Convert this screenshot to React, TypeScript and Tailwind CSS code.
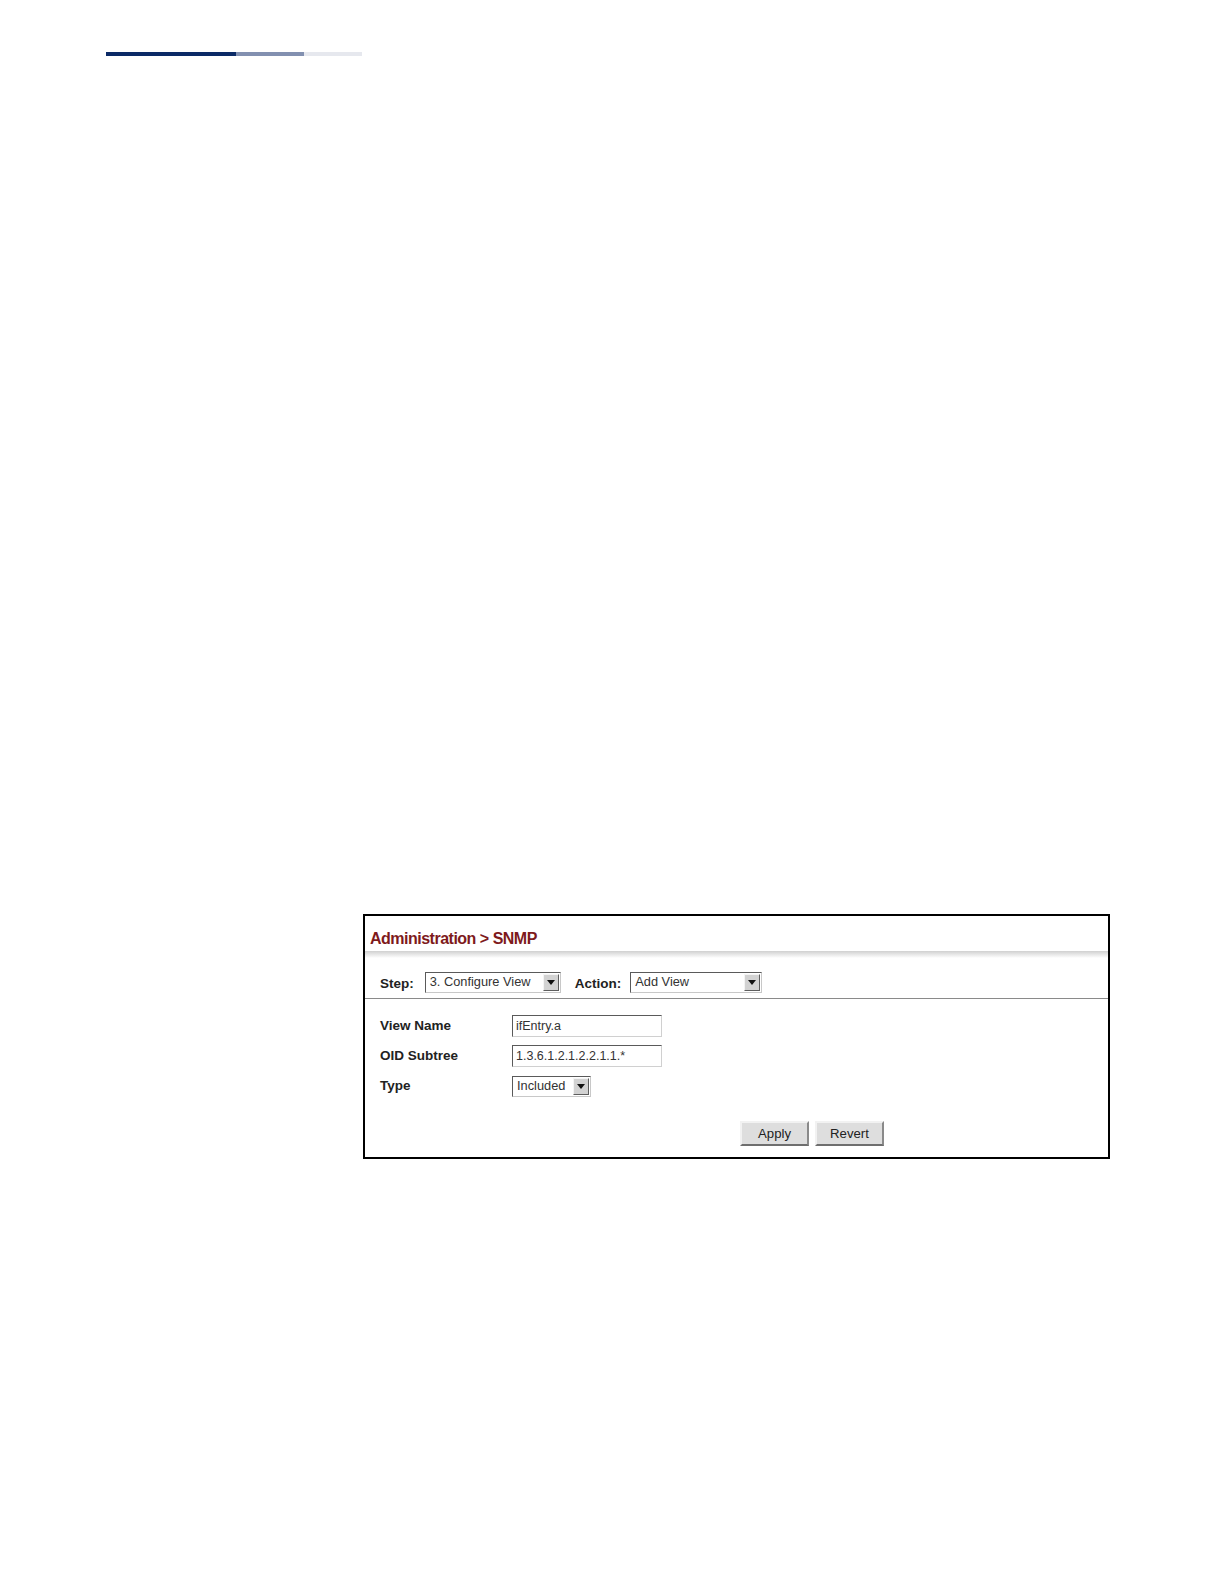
import React from 'react'

const font = { fontFamily: '"Liberation Sans", Arial, sans-serif' }

function Arrow() {
  return (
    <span className="flex h-[17px] w-[16px] shrink-0 items-center justify-center border border-t-[#f4f4f4] border-l-[#f4f4f4] border-b-[#5e5e5e] border-r-[#5e5e5e] bg-[#d2d2d2]">
      <svg width="8" height="5" viewBox="0 0 8 5">
        <path d="M0 0H8L4 5Z" fill="#111" />
      </svg>
    </span>
  )
}

function Select({ value, width }: { value: string; width: string }) {
  return (
    <div
      className={`${width} flex h-[21px] items-center justify-between border border-t-[#5a5a5a] border-l-[#5a5a5a] border-b-[#c8c8c8] border-r-[#c8c8c8] bg-white pl-[4px] pr-[1px]`}
    >
      <span className="text-[12.8px] leading-none text-[#333]">{value}</span>
      <Arrow />
    </div>
  )
}

function Field({ label, children }: { label: string; children: React.ReactNode }) {
  return (
    <div className="flex h-[22px] items-center">
      <span className="w-[132px] text-[13.5px] font-bold text-[#222]">{label}</span>
      {children}
    </div>
  )
}

function TextInput({ value }: { value: string }) {
  return (
    <div className="flex h-[22px] w-[150px] items-center border border-t-[#5a5a5a] border-l-[#5a5a5a] border-b-[#d0d0d0] border-r-[#d0d0d0] bg-white pl-[3px] text-[12.5px] text-[#333]">
      {value}
    </div>
  )
}

function Button({ label }: { label: string }) {
  return (
    <button
      type="button"
      className="h-[25px] w-[69px] border-2 border-t-[#f2f2f2] border-l-[#f2f2f2] border-b-[#6e6e6e] border-r-[#8a8a8a] bg-[#dedede] text-[13.2px] text-[#222]"
    >
      {label}
    </button>
  )
}

export default function App() {
  return (
    <div className="min-h-[1584px] bg-white" style={font}>
      <div className="flex pl-[106px] pt-[52px]">
        <div className="h-[4px] w-[130px] bg-[#0b2a66]" />
        <div className="h-[4px] w-[68px] bg-[#8290b0]" />
        <div className="h-[4px] w-[58px] bg-[#e6e8ee]" />
      </div>

      <div className="ml-[363px] mt-[858px] h-[245px] w-[747px] border-2 border-black">
        <div className="flex h-[35px] items-end pb-[4px] pl-[5px]">
          <span className="text-[16px] font-bold leading-none tracking-[-0.5px] text-[#7e1a1c]">
            Administration &gt; SNMP
          </span>
        </div>
        <div className="h-[7px] bg-gradient-to-b from-[#d0d0d0] to-white" />

        <div className="flex items-center border-b border-[#8a8a8a] pb-[4px] pl-[15px] pt-[12px]">
          <span className="mr-[11px] pt-[4px] text-[13.5px] font-bold text-[#222]">Step:</span>
          <Select value="3. Configure View" width="w-[136px]" />
          <span className="ml-[14px] mr-[9px] pt-[4px] text-[13.5px] font-bold text-[#222]">Action:</span>
          <Select value="Add View" width="w-[132px]" />
        </div>

        <div className="flex flex-col gap-[8px] pl-[15px] pt-[16px]">
          <Field label="View Name">
            <TextInput value="ifEntry.a" />
          </Field>
          <Field label="OID Subtree">
            <TextInput value="1.3.6.1.2.1.2.2.1.1.*" />
          </Field>
          <Field label="Type">
            <Select value="Included" width="w-[79px]" />
          </Field>
        </div>

        <div className="ml-[375px] mt-[24px] flex gap-[6px]">
          <Button label="Apply" />
          <Button label="Revert" />
        </div>
      </div>
    </div>
  )
}
